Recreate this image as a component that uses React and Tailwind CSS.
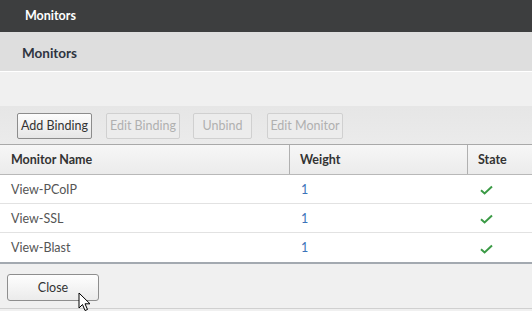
import React from 'react';

const rows = [
  { name: 'View-PCoIP', weight: 1 },
  { name: 'View-SSL', weight: 1 },
  { name: 'View-Blast', weight: 1 },
];

const Check = () => (
  <svg width="13" height="10" viewBox="0 0 13 10" className="block">
    <path d="M1 5.2 L4.6 8.4 L12 1.4" fill="none" stroke="#3a9a45" strokeWidth="2" />
  </svg>
);

const Cursor = () => (
  <svg width="14" height="20" viewBox="0 0 14 20" className="absolute left-[78px] top-[292px]">
    <path d="M1 1 L1 16 L4.5 12.5 L7 18.5 L9.5 17.5 L7 11.8 L12 11.8 Z" fill="#fff" stroke="#000" strokeWidth="1" strokeLinejoin="round" />
  </svg>
);

const ToolButton = ({ children, enabled, w }) => (
  <button
    className={`h-[26px] ${w} rounded-[2px] border text-[12.5px] leading-none pt-[1px] ${
      enabled
        ? 'border-[#8c8c8c] bg-gradient-to-b from-[#fdfdfd] to-[#e6e6e6] text-[#333]'
        : 'border-[#d0d0d0] bg-[#ececec] text-[#b0b0b0]'
    }`}
  >
    {children}
  </button>
);

export default function App() {
  return (
    <div className="relative w-[532px] h-[311px] overflow-hidden bg-[#f0f0f0] font-['Lato','Open_Sans',sans-serif]">
      {/* title bar */}
      <div className="h-[32px] bg-[#3d3e3f] flex items-center pl-[25px]">
        <span className="text-white text-[12.5px] font-bold">Monitors</span>
      </div>

      {/* heading */}
      <div className="h-[40px] bg-[#dedede] border-b border-white flex items-center pl-[22px] pt-[3px]">
        <span className="text-[#2e3440] text-[13.5px] font-bold">Monitors</span>
      </div>

      <div className="h-[34px] bg-[#f0f0f0]" />

      {/* toolbar */}
      <div className="h-[38px] bg-gradient-to-b from-[#e6e6e6] to-[#ebebeb] flex items-center pl-[17px] pt-[1px]">
        <ToolButton enabled w="w-[75px]">Add Binding</ToolButton>
        <div className="w-[14px]" />
        <ToolButton w="w-[74px]">Edit Binding</ToolButton>
        <div className="w-[13px]" />
        <ToolButton w="w-[59px]">Unbind</ToolButton>
        <div className="w-[15px]" />
        <ToolButton w="w-[76px]">Edit Monitor</ToolButton>
      </div>

      {/* table */}
      <div className="bg-white border-t border-[#a9a9a9]">
        <div className="h-[30px] flex bg-gradient-to-b from-[#f7f7f7] to-[#ebebeb] border-b border-[#b8b8b8] text-[12.5px] font-bold text-[#333]">
          <div className="w-[289px] flex items-center pl-[11px] pt-[2px]">Monitor Name</div>
          <div className="w-[178px] flex items-center pl-[10px] pt-[2px] border-l border-[#b0b0b0]">Weight</div>
          <div className="flex-1 flex items-center pl-[10px] pt-[2px] border-l border-[#b0b0b0]">State</div>
        </div>
        {rows.map((r, i) => (
          <div
            key={r.name}
            className={`h-[29px] flex text-[12.5px] pt-[2px] ${i < rows.length - 1 ? 'border-b border-[#e2e2e2]' : ''}`}
          >
            <div className="w-[289px] flex items-center pl-[11px] text-[#555]">{r.name}</div>
            <div className="w-[178px] flex items-center pl-[12px] text-[#3b73b9]">{r.weight}</div>
            <div className="flex-1 flex items-center pl-[13px]">
              <Check />
            </div>
          </div>
        ))}
      </div>

      {/* footer */}
      <div className="border-t-2 border-[#a3a9b0] bg-[#f0f0f0] h-[47px] pt-[10px] pl-[7px] border-b border-b-[#d0d0d0]">
        <button className="w-[92px] h-[27px] rounded-[3px] border border-[#8e8e8e] bg-gradient-to-b from-[#fefefe] to-[#ebebeb] text-[12.5px] text-[#333] pt-[2px]">
          Close
        </button>
      </div>

      <Cursor />
    </div>
  );
}
